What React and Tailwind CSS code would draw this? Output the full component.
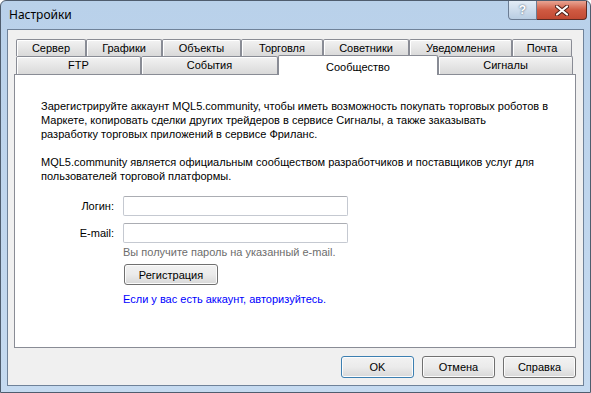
import React from 'react'

const row1 = [
    ['Сервер', 'w-[70px]'],
    ['Графики', 'w-[76px]'],
    ['Объекты', 'w-[79px]'],
    ['Торговля', 'w-[82px]'],
    ['Советники', 'w-[86px]'],
    ['Уведомления', 'w-[103px]'],
    ['Почта', 'w-[60px]'],
]

const tabBase = 'flex items-center justify-center border border-b-0 border-[#898c95] bg-gradient-to-b from-[#f3f3f3] to-[#d9d9d9] shadow-[inset_1px_1px_0_#ffffff] rounded-t-[2px]'
const btn = 'flex items-center justify-center rounded-[3px] border bg-gradient-to-b from-[#f2f2f2] via-[#ebebeb] to-[#d8d8d8] shadow-[inset_0_0_0_1px_#fcfcfc]'

const App = () => {
    return (
        <div className="w-[591px] h-[393px] flex flex-col rounded-t-[6px] border border-[#4f5d6e] bg-gradient-to-b from-[#b9d1ea] to-[#c5daf0] text-[11px] text-black" style={{ fontFamily: '"Liberation Sans", Arial, sans-serif' }}>
            {/* title bar */}
            <div className="h-[28px] flex items-start justify-between">
                <div className="pl-[8px] pt-[6px] text-[12px] leading-[16px]" style={{ fontFamily: '"Noto Sans", sans-serif' }}>Настройки</div>
                <div className="flex mr-[3px]">
                    <div className="w-[29px] h-[19px] flex items-center justify-center rounded-bl-[4px] border border-t-0 border-[#6b7c93] bg-gradient-to-b from-[#e3ecf6] to-[#b9cde2] text-[12px] font-bold text-white [text-shadow:0_0_2px_#33475e]">?</div>
                    <div className="w-[50px] h-[19px] flex items-center justify-center rounded-br-[4px] border border-t-0 border-l-0 border-[#5c2b24] bg-gradient-to-b from-[#e8a493] via-[#cf5a42] to-[#c24a33] text-white">
                        <svg width="14" height="11" viewBox="0 0 14 11">
                            <path d="M2 1.5 L12 9.5 M12 1.5 L2 9.5" stroke="#4a1d16" strokeWidth="4" strokeLinecap="round" />
                            <path d="M2 1.5 L12 9.5 M12 1.5 L2 9.5" stroke="#ffffff" strokeWidth="2.2" strokeLinecap="round" />
                        </svg>
                    </div>
                </div>
            </div>

            {/* client area */}
            <div className="flex-1 mx-[6px] mb-[6px] border border-[#6f8299] bg-[#f0f0f0] pl-[6px] pt-[9px]">
                <div className="w-[562px]">
                    <div className="flex pl-[2px] h-[17px]">
                        {row1.map(([t, w]) => (
                            <div key={t} className={`${tabBase} ${w} h-[17px] pt-[1px]`}>{t}</div>
                        ))}
                    </div>
                    <div className="flex pl-[2px] h-[18px]">
                        <div className={`${tabBase} w-[125px] h-[18px]`}>FTP</div>
                        <div className={`${tabBase} w-[137px] h-[18px]`}>События</div>
                        <div className="relative z-10 -top-[1px] w-[160px] h-[20px] flex justify-center pt-[3px] border border-b-0 border-[#898c95] bg-white rounded-t-[2px]">Сообщество</div>
                        <div className={`${tabBase} w-[135px] h-[18px]`}>Сигналы</div>
                    </div>
                    <div className="h-[274px] border border-[#898c95] bg-white pl-[26px] pt-[24px] leading-[14px]">
                        <p className="whitespace-nowrap">
                            Зарегистрируйте аккаунт MQL5.community, чтобы иметь возможность покупать торговых роботов в<br />
                            Маркете, копировать сделки других трейдеров в сервисе Сигналы, а также заказывать<br />
                            разработку торговых приложений в сервисе Фриланс.
                        </p>
                        <p className="whitespace-nowrap mt-[14px]">
                            MQL5.community является официальным сообществом разработчиков и поставщиков услуг для<br />
                            пользователей торговой платформы.
                        </p>
                        <div className="mt-[13px] flex flex-col">
                            <div className="flex items-center">
                                <div className="w-[74px] text-right pr-[1px]">Логин:</div>
                                <div className="ml-[8px] w-[225px] h-[20px] rounded-[2px] border border-[#c5c9d1] border-t-[#abadb3] bg-white" />
                            </div>
                            <div className="flex items-center mt-[7px]">
                                <div className="w-[74px] text-right pr-[1px]">E-mail:</div>
                                <div className="ml-[8px] w-[225px] h-[20px] rounded-[2px] border border-[#c5c9d1] border-t-[#abadb3] bg-white" />
                            </div>
                            <div className="ml-[82px] mt-[2px] text-[#6d6d6d]">Вы получите пароль на указанный e-mail.</div>
                            <div className={`${btn} ml-[83px] mt-[5px] w-[94px] h-[21px] border-[#707070]`}>Регистрация</div>
                            <div className="ml-[82px] mt-[7px] text-[#0000ff]">Если у вас есть аккаунт, авторизуйтесь.</div>
                        </div>
                    </div>
                </div>
                <div className="flex justify-end gap-[8px] w-[562px] mt-[8px]">
                    <div className={`${btn} w-[73px] h-[22px] border-[#3c7fb1] shadow-[inset_0_0_0_1px_#9fd5f3]`}>OK</div>
                    <div className={`${btn} w-[73px] h-[22px] border-[#707070]`}>Отмена</div>
                    <div className={`${btn} w-[73px] h-[22px] border-[#707070]`}>Справка</div>
                </div>
            </div>
        </div>
    )
}

export default App
